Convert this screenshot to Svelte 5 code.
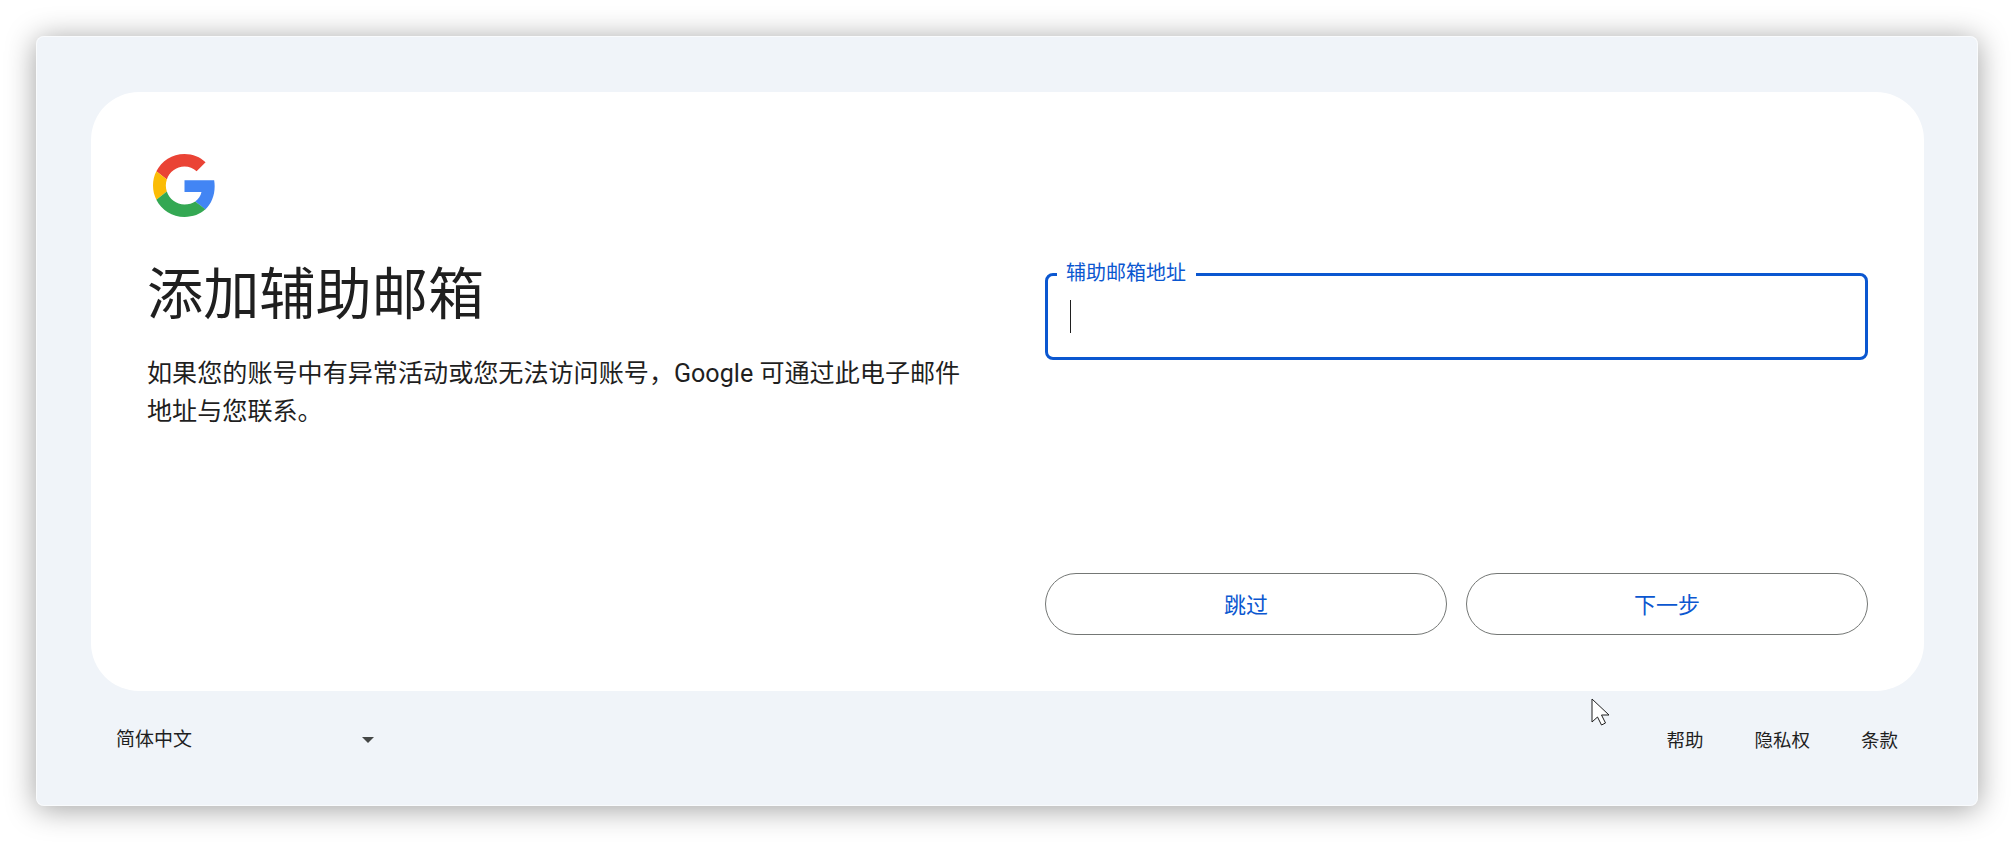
<script>
  const footerLinks = ['帮助', '隐私权', '条款'];
</script>

<div class="window">
  <main class="card">
    <div class="intro">
      <svg class="logo" viewBox="0 0 48 48" aria-label="Google">
        <path fill="#EA4335" d="M24 9.5c3.54 0 6.71 1.22 9.21 3.6l6.85-6.85C35.9 2.38 30.47 0 24 0 14.62 0 6.51 5.38 2.56 13.22l7.98 6.19C12.43 13.72 17.74 9.5 24 9.5z"/>
        <path fill="#4285F4" d="M46.98 24.55c0-1.57-.15-3.09-.38-4.55H24v9.02h12.94c-.58 2.96-2.26 5.48-4.78 7.18l7.73 6c4.51-4.18 7.09-10.36 7.09-17.65z"/>
        <path fill="#FBBC05" d="M10.53 28.59c-.48-1.45-.76-2.99-.76-4.59s.27-3.14.76-4.59l-7.98-6.19C.92 16.46 0 20.12 0 24c0 3.88.92 7.54 2.56 10.78l7.97-6.19z"/>
        <path fill="#34A853" d="M24 48c6.48 0 11.93-2.13 15.89-5.81l-7.73-6c-2.15 1.45-4.92 2.3-8.16 2.3-6.26 0-11.57-4.22-13.47-9.91l-7.98 6.19C6.51 42.62 14.62 48 24 48z"/>
      </svg>
      <h1>添加辅助邮箱</h1>
      <p>如果您的账号中有异常活动或您无法访问账号，Google 可通过此电子邮件地址与您联系。</p>
    </div>

    <div class="form">
      <div class="field">
        <span class="label">辅助邮箱地址</span>
        <span class="caret"></span>
      </div>
      <div class="actions">
        <button type="button">跳过</button>
        <button type="button">下一步</button>
      </div>
    </div>
  </main>

  <footer>
    <div class="lang">
      <span>简体中文</span>
      <span class="arrow"></span>
    </div>
    <nav>
      {#each footerLinks as link}
        <span>{link}</span>
      {/each}
    </nav>
  </footer>

  <svg class="cursor" width="20" height="28" viewBox="0 0 20 28">
    <path d="M1 1v23l5.5-5 4 8 4-2-4-8H18z" fill="#fff" stroke="#1f1f1f" stroke-width="1"/>
  </svg>
</div>

<style>
  :global(body) {
    background: #fff;
    font-family: Roboto, "Noto Sans CJK SC", sans-serif;
  }

  .window {
    position: relative;
    box-sizing: border-box;
    width: 1942px;
    height: 770px;
    margin: 36px;
    padding: 56px 54px 0 55px;
    background: #f0f4f9;
    border-radius: 8px;
    box-shadow: inset 0 0 0 1px rgba(255, 255, 255, 0.6), 0 3px 30px rgba(0, 0, 0, 0.38);
  }

  .card {
    box-sizing: border-box;
    display: grid;
    grid-template-columns: 822px 823px;
    column-gap: 76px;
    height: 599px;
    padding: 62px 56px 56px 56px;
    background: #fff;
    border-radius: 48px;
  }

  .logo {
    display: block;
    width: 63px;
    height: 63px;
    margin: 0 0 42px 6px;
  }

  h1 {
    margin: 0 0 24px;
    font-size: 56.2px;
    line-height: 72px;
    font-weight: 400;
    color: #1f1f1f;
  }

  p {
    margin: 0;
    font-size: 25.1px;
    line-height: 38px;
    color: #1f1f1f;
  }

  .form {
    display: flex;
    flex-direction: column;
    justify-content: space-between;
    padding-top: 119px;
  }

  .field {
    position: relative;
    box-sizing: border-box;
    height: 87px;
    padding: 24px 22px;
    border: 3px solid #0b57d0;
    border-radius: 8px;
  }

  .label {
    position: absolute;
    left: 9px;
    top: -17px;
    padding: 0 10px 0 9px;
    background: #fff;
    font-size: 20px;
    line-height: 28px;
    color: #0b57d0;
  }

  .caret {
    display: block;
    width: 1px;
    height: 33px;
    background: #1f1f1f;
  }

  .actions {
    display: grid;
    grid-template-columns: 1fr 1fr;
    gap: 19px;
  }

  button {
    height: 62px;
    padding: 0 0 2px;
    background: #fff;
    border: 1px solid #747775;
    border-radius: 31px;
    font: inherit;
    font-size: 22px;
    color: #0b57d0;
  }

  footer {
    display: flex;
    justify-content: space-between;
    align-items: center;
    height: 95px;
    padding: 0 26px 0 25px;
    font-size: 18.5px;
    color: #1f1f1f;
  }

  .lang {
    display: flex;
    align-items: center;
    gap: 170px;
    margin-top: -2px;
    font-size: 19px;
  }

  .arrow {
    width: 0;
    height: 0;
    margin-top: 5px;
    border-left: 6px solid transparent;
    border-right: 6px solid transparent;
    border-top: 6px solid #444746;
  }

  nav {
    display: flex;
    gap: 51px;
  }

  .cursor {
    position: absolute;
    left: 1555px;
    top: 662px;
  }
</style>
